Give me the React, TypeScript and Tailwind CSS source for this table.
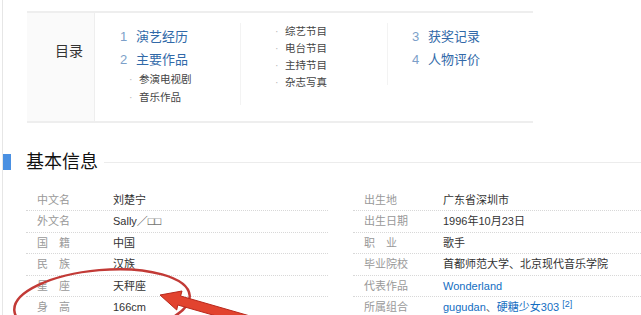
import React from 'react';

const cjk = { fontFamily: '"Liberation Sans", "Noto Sans CJK SC", sans-serif' };

type Row = { label: string; value: React.ReactNode };

const leftRows: Row[] = [
  { label: '中文名', value: '刘楚宁' },
  { label: '外文名', value: 'Sally／□□' },
  { label: '国　籍', value: '中国' },
  { label: '民　族', value: '汉族' },
  { label: '星　座', value: '天秤座' },
  { label: '身　高', value: '166cm' },
];

const rightRows: Row[] = [
  { label: '出生地', value: '广东省深圳市' },
  { label: '出生日期', value: '1996年10月23日' },
  { label: '职　业', value: '歌手' },
  { label: '毕业院校', value: '首都师范大学、北京现代音乐学院' },
  { label: '代表作品', value: <span className="text-[#136ec2]">Wonderland</span> },
  {
    label: '所属组合',
    value: (
      <span>
        <span className="text-[#136ec2]">gugudan</span>
        <span className="text-[#666]">、</span>
        <span className="text-[#136ec2]">硬糖少女303</span>
        <sup className="ml-[3px] text-[9px] text-[#136ec2]">[2]</sup>
      </span>
    ),
  },
];

// one side of the basic info table
function InfoTable({ rows, labelWidth, className }: { rows: Row[]; labelWidth: string; className: string }) {
  return (
    <div className={className}>
      {rows.map((r, i) => (
        <div
          key={r.label}
          className={`flex h-[21.4px] items-center whitespace-nowrap text-[11px] ${
            i < rows.length - 1 ? 'border-b border-dotted border-[#d8d8d8]' : ''
          }`}
        >
          <div className={`${labelWidth} shrink-0 pl-[11px] text-[#999]`}>{r.label}</div>
          <div className="text-[#333]">{r.value}</div>
        </div>
      ))}
    </div>
  );
}

function MainItem({ num, text }: { num: string; text: string }) {
  return (
    <div className="flex h-[23px] items-center text-[13px]">
      <span className="w-[16px] text-[#7c9fc9]">{num}</span>
      <span className="text-[#3169a8]">{text}</span>
    </div>
  );
}

function SubItem({ text, h }: { text: string; h: string }) {
  return (
    <div className={`flex ${h} items-center text-[10.5px]`}>
      <span className="w-[10px] text-[#bbb]">·</span>
      <span className="text-[#444]">{text}</span>
    </div>
  );
}

export default function App() {
  return (
    <div className="relative h-[315px] w-[641px] overflow-hidden bg-white pl-[2px]" style={cjk}>
      <div className="h-full border-l border-[#e6e6e6] pt-[11px]">
        {/* Catalog */}
        <div className="ml-[24px] flex h-[112px] w-[506px] border-y-2 border-[#eeeeee]">
          <div className="w-[68px] shrink-0 border-r border-[#eeeeee] bg-[#fafafa] pl-[28px] pt-[28px] text-[14px] text-[#333]">
            目录
          </div>
          <div className="w-[145px] shrink-0 pl-[25px] pt-[12px]">
            <MainItem num="1" text="演艺经历" />
            <MainItem num="2" text="主要作品" />
            <div className="pl-[9px]">
              <SubItem text="参演电视剧" h="h-[18px]" />
              <SubItem text="音乐作品" h="h-[18px]" />
            </div>
          </div>
          <div className="mt-[10px] h-[82px] w-px bg-[#f3f3f3]" />
          <div className="w-[146px] shrink-0 pl-[34px] pt-[10px]">
            <SubItem text="综艺节目" h="h-[17px]" />
            <SubItem text="电台节目" h="h-[17px]" />
            <SubItem text="主持节目" h="h-[17px]" />
            <SubItem text="杂志写真" h="h-[17px]" />
          </div>
          <div className="mt-[10px] h-[62px] w-px bg-[#f3f3f3]" />
          <div className="pl-[24px] pt-[12px]">
            <MainItem num="3" text="获奖记录" />
            <MainItem num="4" text="人物评价" />
          </div>
        </div>

        {/* Heading */}
        <div className="mt-[25px] flex h-[28px] items-center">
          <div className="h-[16px] w-[8px] bg-[#4a90e2]" />
          <div className="ml-[15px] text-[18px] leading-none text-[#111]">基本信息</div>
          <div className="ml-[6px] h-px flex-1 bg-[#ececec]" />
        </div>

        {/* Basic info */}
        <div className="mt-[14px] ml-[23px] flex">
          <InfoTable rows={leftRows} labelWidth="w-[87px]" className="w-[302px]" />
          <InfoTable rows={rightRows} labelWidth="w-[90px]" className="ml-[25px] flex-1" />
        </div>
      </div>

      {/* red annotation */}
      <svg className="pointer-events-none absolute left-0 top-0" width="641" height="315" viewBox="0 0 641 315">
        <ellipse
          cx="102"
          cy="303"
          rx="88"
          ry="33"
          transform="rotate(-5 102 303)"
          fill="none"
          stroke="#c23a36"
          strokeWidth="2.5"
        />
        <polygon
          points="160,295 182,291 180.6,296 257,318 255,327 177.8,305 176.7,310"
          fill="#e2432f"
          stroke="#b8281c"
          strokeWidth="1"
        />
      </svg>
    </div>
  );
}
